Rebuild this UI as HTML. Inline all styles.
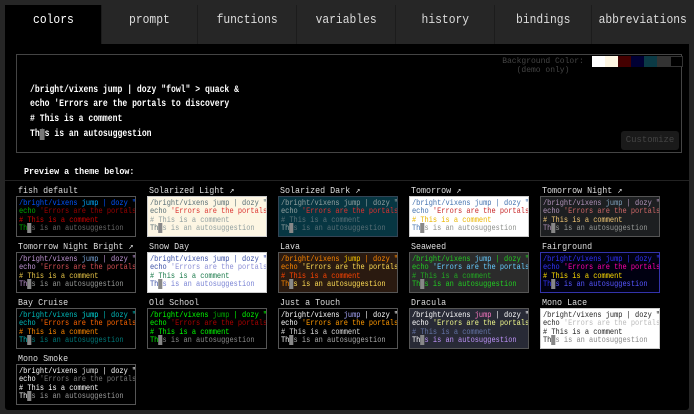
<!DOCTYPE html>
<html><head><meta charset="utf-8"><style>
*{margin:0;padding:0;box-sizing:border-box}
body{width:694px;height:414px;background:#262626;overflow:hidden;font-family:"Liberation Mono","DejaVu Sans Mono",monospace}
#c{position:absolute;left:5px;top:5px;width:684px;height:405px;background:#000;border-radius:3px}
.tab{position:absolute;top:5px;height:39px;background:#262626;color:#ddd;font-size:13px;text-align:center;line-height:29px;border-left:1px solid #1c1c1c}
.tab span{display:inline-block;transform:scaleX(0.87)}
.tab.a{background:#000;color:#fff}
#demo{position:absolute;left:16px;top:54px;width:666px;height:99px;border:1px solid #444;background:#000}
.dl{position:absolute;left:13px;font-size:10px;line-height:12px;font-weight:bold;color:#fff;white-space:pre;transform:scaleX(0.81);transform-origin:0 0}
.sw{position:absolute;top:1px;width:13px;height:11px}
.cur{background:#777;color:#777}
#cust{position:absolute;left:604px;top:76px;width:58px;height:19px;background:#1a1a1a;border-radius:3px;color:#444;font-size:9px;text-align:center;line-height:19px}
.t{position:absolute;font-size:9.5px;line-height:11px;height:11px;color:#ddd;white-space:pre;transform:scaleX(0.88);transform-origin:0 0}
.b{position:absolute;width:120px;height:41px;border:1px solid #555;overflow:hidden}
.b div{position:absolute;left:2px;top:2px;font-size:8.5px;line-height:8.4px;white-space:pre;transform:scaleX(0.82);transform-origin:0 0}
</style></head><body>
<div id="c"></div>
<div class="tab a" style="left:5px;width:96px;border:none"><span>colors</span></div>
<div class="tab" style="left:101px;width:96px"><span>prompt</span></div>
<div class="tab" style="left:197px;width:99px"><span>functions</span></div>
<div class="tab" style="left:296px;width:99px"><span>variables</span></div>
<div class="tab" style="left:395px;width:99px"><span>history</span></div>
<div class="tab" style="left:494px;width:97px"><span>bindings</span></div>
<div class="tab" style="left:591px;width:98px"><span>abbreviations</span></div>
<div id="demo">
<div style="position:absolute;left:478px;top:2px;width:96px;font-size:8px;color:#444;text-align:center;line-height:9px">Background Color:<br>(demo only)</div>
<div class="sw" style="left:575px;background:#fff"></div>
<div class="sw" style="left:588px;background:#fdf6e3"></div>
<div class="sw" style="left:601px;background:#400"></div>
<div class="sw" style="left:614px;background:#003"></div>
<div class="sw" style="left:627px;background:#0b3a45"></div>
<div class="sw" style="left:640px;background:#333"></div>
<div class="sw" style="left:653px;background:#000;border:1px solid #333"></div>
<div class="dl" style="top:30px">/bright/vixens jump | dozy "fowl" > quack &amp;</div>
<div class="dl" style="top:44px">echo 'Errors are the portals to discovery</div>
<div class="dl" style="top:59px"># This is a comment</div>
<div class="dl" style="top:74px">Th<span class="cur">i</span>s is an autosuggestion</div>
<div id="cust">Customize</div>
</div>
<div class="t" style="left:24px;top:166px;font-weight:bold;color:#fff">Preview a theme below:</div>
<div style="position:absolute;left:5px;top:180px;width:684px;height:1px;background:#222"></div>
<div id="g"></div>
<script>
var T=[
["fish default","#000","#555","#05f","#0af","#0a0","#900","#c00","#666",1],
["Solarized Light ↗","#fdf6e3","#ccc","#586e75","#586e75","#586e75","#dc322f","#93a1a1","#93a1a1",0],
["Solarized Dark ↗","#073642","#345","#93a1a1","#93a1a1","#93a1a1","#dc322f","#586e75","#586e75",0],
["Tomorrow ↗","#fff","#ccc","#4271ae","#4271ae","#4271ae","#c82829","#eab700","#8e908c",0],
["Tomorrow Night ↗","#1d1f21","#555","#b294bb","#81a2be","#b294bb","#cc6666","#f0c674","#969896",0],
["Tomorrow Night Bright ↗","#000","#555","#c397d8","#7aa6da","#c397d8","#d54e53","#e7c547","#969896",0],
["Snow Day","#fff","#ccc","#3a4fa6","#3a4fa6","#3a4fa6","#8b8ed6","#1a7a4a","#7a84d4",0],
["Lava","#2a1a10","#555","#f80","#fc0","#f80","#fd5","#f40","#fd5",1],
["Seaweed","#2b2b2b","#555","#2c2","#6cf","#2c2","#6cf","#2a2","#2c2",0],
["Fairground","#001","#33a","#33f","#33f","#33f","#f0a","#fd0","#55f",0],
["Bay Cruise","#000","#555","#0bb","#0dd","#0bb","#f60","#f80","#077",0],
["Old School","#000","#555","#0f0","#0a0","#0f0","#a00","#0f0","#888",0],
["Just a Touch","#000","#555","#fff","#aaf","#fff","#f90","#ddd","#aaa",0],
["Dracula","#282a36","#555","#fff","#ff79c6","#fff","#f1fa8c","#6272a4","#bd93f9",0],
["Mono Lace","#fff","#ccc","#222","#222","#222","#bbb","#222","#888",0],
["Mono Smoke","#000","#555","#fff","#ddd","#fff","#777","#fff","#999",0]];
var xs=[16,147,278,409,540],h="";
T.forEach(function(t,i){var x=xs[i%5],y=185+Math.floor(i/5)*56;
h+='<div class="t" style="left:'+(x+2)+'px;top:'+y+'px">'+t[0]+'</div>';
h+='<div class="b" style="left:'+x+'px;top:'+(y+11)+'px;background:'+t[1]+';border-color:'+t[2]+'"><div>'+
'<span style="color:'+t[3]+'">/bright/vixens </span><span style="color:'+t[4]+'">jump</span><span style="color:'+t[3]+'"> | dozy "</span>\n'+
'<span style="color:'+t[5]+'">echo </span><span style="color:'+t[6]+'">\'Errors are the portals</span>\n'+
'<span style="color:'+t[7]+'"># This is a comment</span>\n'+
'<span style="color:'+t[5]+'">Th</span><span style="background:#888;color:#888">i</span><span style="color:'+t[8]+'">s is an autosuggestion</span></div></div>';});
document.getElementById("g").innerHTML=h;
</script>
</body></html>
